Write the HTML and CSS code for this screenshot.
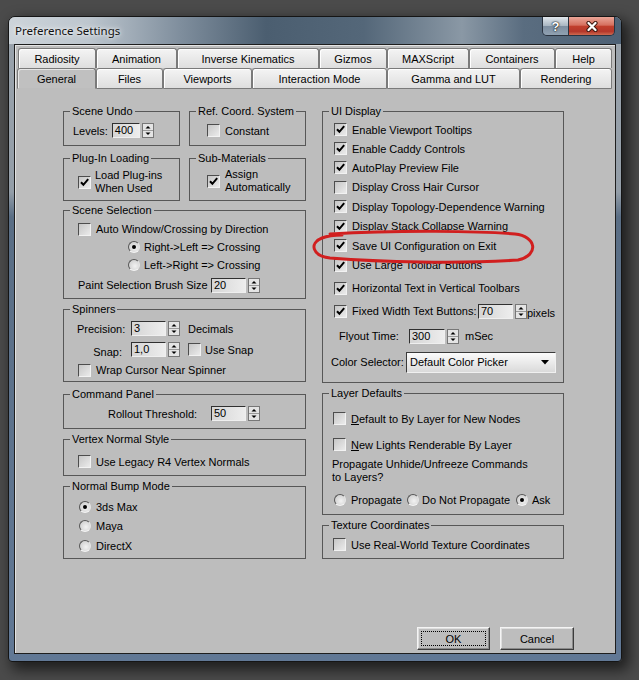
FILE: index.html
```html
<!DOCTYPE html>
<html>
<head>
<meta charset="utf-8">
<title>Preference Settings</title>
<link rel="stylesheet" href="styles.css">
</head>
<body>
<div class="window">
  <div class="titlebar">
    <span class="title">Preference Settings</span>
    <div class="caps">
      <div class="cap help">?</div>
      <div class="cap close"><svg width="14" height="11" viewBox="0 0 14 11"><path d="M3.5 2 L10.5 9 M10.5 2 L3.5 9" stroke="#3b1810" stroke-width="4.2" stroke-linecap="round"/><path d="M3.5 2 L10.5 9 M10.5 2 L3.5 9" stroke="#fff" stroke-width="2.3" stroke-linecap="round"/></svg></div>
    </div>
  </div>
  <div class="client">
    <div class="tabs">
      <div class="tabrow back">
        <div class="tab w78">Radiosity</div>
        <div class="tab w81">Animation</div>
        <div class="tab w142">Inverse Kinematics</div>
        <div class="tab w68">Gizmos</div>
        <div class="tab w82">MAXScript</div>
        <div class="tab w86">Containers</div>
        <div class="tab w57">Help</div>
      </div>
      <div class="tabrow front">
        <div class="tab sel w79">General</div>
        <div class="tab w67">Files</div>
        <div class="tab w89">Viewports</div>
        <div class="tab w135">Interaction Mode</div>
        <div class="tab w133">Gamma and LUT</div>
        <div class="tab w92">Rendering</div>
      </div>
    </div>
    <div class="panel">
      <div class="col left">
        <div class="pair">
          <div class="group g-undo"><span class="gt">Scene Undo</span>
            <div class="row h15"><span>Levels:</span><span class="field w28 ml4">400</span><svg class="arr" width="12" height="15" viewBox="0 0 12 15"><rect x=".5" y=".5" width="11" height="14" fill="#e4e4e4" stroke="#777"/><path d="M1 7.5h10" stroke="#999"/><path d="M3.5 5.5h5L6 3z"/><path d="M3.5 9.5h5L6 12z"/></svg></div>
          </div>
          <div class="group g-ref"><span class="gt">Ref. Coord. System</span>
            <div class="row h13"><span class="cb"></span><span class="ml5">Constant</span></div>
          </div>
        </div>
        <div class="pair mt12">
          <div class="group g-plug"><span class="gt">Plug-In Loading</span>
            <div class="row"><span class="cb"><svg width="11" height="11" viewBox="0 0 11 11"><path d="M2 5.2l2.4 2.6 4.8-5.6" fill="none" stroke="#000" stroke-width="2"/></svg></span><span class="two ml4">Load Plug-ins<br>When Used</span></div>
          </div>
          <div class="group g-sub"><span class="gt">Sub-Materials</span>
            <div class="row"><span class="cb"><svg width="11" height="11" viewBox="0 0 11 11"><path d="M2 5.2l2.4 2.6 4.8-5.6" fill="none" stroke="#000" stroke-width="2"/></svg></span><span class="two ml5">Assign<br>Automatically</span></div>
          </div>
        </div>
        <div class="group g-sel mt9"><span class="gt">Scene Selection</span>
          <div class="row h18"><span class="cb"></span><span class="ml5">Auto Window/Crossing by Direction</span></div>
          <div class="row h18 ml50"><span class="rb on"></span><span class="ml4">Right-&gt;Left =&gt; Crossing</span></div>
          <div class="row h18 ml50"><span class="rb"></span><span class="ml4">Left-&gt;Right =&gt; Crossing</span></div>
          <div class="row h18 mt2"><span class="lbl w133">Paint Selection Brush Size</span><span class="field w35">20</span><svg class="arr" width="12" height="15" viewBox="0 0 12 15"><rect x=".5" y=".5" width="11" height="14" fill="#e4e4e4" stroke="#777"/><path d="M1 7.5h10" stroke="#999"/><path d="M3.5 5.5h5L6 3z"/><path d="M3.5 9.5h5L6 12z"/></svg></div>
        </div>
        <div class="group g-spin mt10"><span class="gt">Spinners</span>
          <div class="row h21"><span class="lbl w45 rt">Precision:</span><span class="field w35 ml9">3</span><svg class="arr" width="12" height="15" viewBox="0 0 12 15"><rect x=".5" y=".5" width="11" height="14" fill="#e4e4e4" stroke="#777"/><path d="M1 7.5h10" stroke="#999"/><path d="M3.5 5.5h5L6 3z"/><path d="M3.5 9.5h5L6 12z"/></svg><span class="ml8">Decimals</span></div>
          <div class="row h21"><span class="lbl w45 rt low">Snap:</span><span class="field w35 ml9">1,0</span><svg class="arr" width="12" height="15" viewBox="0 0 12 15"><rect x=".5" y=".5" width="11" height="14" fill="#e4e4e4" stroke="#777"/><path d="M1 7.5h10" stroke="#999"/><path d="M3.5 5.5h5L6 3z"/><path d="M3.5 9.5h5L6 12z"/></svg><span class="cb ml8"></span><span class="ml4">Use Snap</span></div>
          <div class="row h20"><span class="cb ml1"></span><span class="ml5">Wrap Cursor Near Spinner</span></div>
        </div>
        <div class="group g-cmd mt12"><span class="gt">Command Panel</span>
          <div class="row h15"><span class="lbl w103">Rollout Threshold:</span><span class="field w35">50</span><svg class="arr" width="12" height="15" viewBox="0 0 12 15"><rect x=".5" y=".5" width="11" height="14" fill="#e4e4e4" stroke="#777"/><path d="M1 7.5h10" stroke="#999"/><path d="M3.5 5.5h5L6 3z"/><path d="M3.5 9.5h5L6 12z"/></svg></div>
        </div>
        <div class="group g-vtx mt10"><span class="gt">Vertex Normal Style</span>
          <div class="row h13"><span class="cb"></span><span class="ml5">Use Legacy R4 Vertex Normals</span></div>
        </div>
        <div class="group g-bump mt10"><span class="gt">Normal Bump Mode</span>
          <div class="row h19"><span class="rb on"></span><span class="ml5">3ds Max</span></div>
          <div class="row h20"><span class="rb"></span><span class="ml5">Maya</span></div>
          <div class="row h20"><span class="rb"></span><span class="ml5">DirectX</span></div>
        </div>
      </div>
      <div class="col right">
        <div class="group g-ui"><span class="gt">UI Display</span>
          <div class="row h19"><span class="cb"><svg width="11" height="11" viewBox="0 0 11 11"><path d="M2 5.2l2.4 2.6 4.8-5.6" fill="none" stroke="#000" stroke-width="2"/></svg></span><span class="ml5">Enable Viewport Tooltips</span></div>
          <div class="row h19"><span class="cb"><svg width="11" height="11" viewBox="0 0 11 11"><path d="M2 5.2l2.4 2.6 4.8-5.6" fill="none" stroke="#000" stroke-width="2"/></svg></span><span class="ml5">Enable Caddy Controls</span></div>
          <div class="row h19"><span class="cb"><svg width="11" height="11" viewBox="0 0 11 11"><path d="M2 5.2l2.4 2.6 4.8-5.6" fill="none" stroke="#000" stroke-width="2"/></svg></span><span class="ml5">AutoPlay Preview File</span></div>
          <div class="row h20"><span class="cb"></span><span class="ml5">Display Cross Hair Cursor</span></div>
          <div class="row h19"><span class="cb"><svg width="11" height="11" viewBox="0 0 11 11"><path d="M2 5.2l2.4 2.6 4.8-5.6" fill="none" stroke="#000" stroke-width="2"/></svg></span><span class="ml5">Display Topology-Dependence Warning</span></div>
          <div class="row h20"><span class="cb"><svg width="11" height="11" viewBox="0 0 11 11"><path d="M2 5.2l2.4 2.6 4.8-5.6" fill="none" stroke="#000" stroke-width="2"/></svg></span><span class="ml5">Display Stack Collapse Warning</span></div>
          <div class="row h19"><span class="cb"><svg width="11" height="11" viewBox="0 0 11 11"><path d="M2 5.2l2.4 2.6 4.8-5.6" fill="none" stroke="#000" stroke-width="2"/></svg></span><span class="ml5">Save UI Configuration on Exit</span></div>
          <div class="row h20"><span class="cb"><svg width="11" height="11" viewBox="0 0 11 11"><path d="M2 5.2l2.4 2.6 4.8-5.6" fill="none" stroke="#000" stroke-width="2"/></svg></span><span class="ml5">Use Large Toolbar Buttons</span></div>
          <div class="row h20 mt3"><span class="cb"><svg width="11" height="11" viewBox="0 0 11 11"><path d="M2 5.2l2.4 2.6 4.8-5.6" fill="none" stroke="#000" stroke-width="2"/></svg></span><span class="ml5">Horizontal Text in Vertical Toolbars</span></div>
          <div class="row h22 mt2"><span class="cb"><svg width="11" height="11" viewBox="0 0 11 11"><path d="M2 5.2l2.4 2.6 4.8-5.6" fill="none" stroke="#000" stroke-width="2"/></svg></span><span class="lbl w125 ml5">Fixed Width Text Buttons:</span><span class="field w35 ml1">70</span><svg class="arr" width="12" height="15" viewBox="0 0 12 15"><rect x=".5" y=".5" width="11" height="14" fill="#e4e4e4" stroke="#777"/><path d="M1 7.5h10" stroke="#999"/><path d="M3.5 5.5h5L6 3z"/><path d="M3.5 9.5h5L6 12z"/></svg><span class="low">pixels</span></div>
          <div class="row h20 mt4"><span class="lbl w70 ml5">Flyout Time:</span><span class="field w36">300</span><svg class="arr" width="12" height="15" viewBox="0 0 12 15"><rect x=".5" y=".5" width="11" height="14" fill="#e4e4e4" stroke="#777"/><path d="M1 7.5h10" stroke="#999"/><path d="M3.5 5.5h5L6 3z"/><path d="M3.5 9.5h5L6 12z"/></svg><span class="ml6">mSec</span></div>
          <div class="row h22 mt5"><span class="lbl w75 mln3">Color Selector:</span><div class="combo"><span>Default Color Picker</span><svg class="drop" width="8" height="5" viewBox="0 0 8 5"><path d="M0 0h8L4 4.5z"/></svg></div></div>
        </div>
        <div class="group g-layer mt10"><span class="gt">Layer Defaults</span>
          <div class="row h19"><span class="cb"></span><span class="ml5"><u>D</u>efault to By Layer for New Nodes</span></div>
          <div class="row h19 mt7"><span class="cb"></span><span class="ml5"><u>N</u>ew Lights Renderable By Layer</span></div>
          <div class="two mt4 mln1">Propagate Unhide/Unfreeze Commands<br>to Layers?</div>
          <div class="row h16 mt8 ml1">
            <span class="ritem w73"><span class="rb"></span><span class="ml5">Propagate</span></span>
            <span class="ritem w109"><span class="rb"></span><span class="ml3">Do Not Propagate</span></span>
            <span class="ritem"><span class="rb on"></span><span class="ml4">Ask</span></span>
          </div>
        </div>
        <div class="group g-tex mt10"><span class="gt">Texture Coordinates</span>
          <div class="row h13"><span class="cb"></span><span class="ml5">Use Real-World Texture Coordinates</span></div>
        </div>
      </div>
    </div>
    <div class="btnrow">
      <button class="btn ok">OK</button>
      <button class="btn cancel">Cancel</button>
    </div>
  </div>
</div>
<svg class="annot" width="639" height="680" viewBox="0 0 639 680"><path d="M330 234 C400 230 480 231 515 234 C536 236 540 255 518 260 C460 264 380 262 330 258 C312 256 309 243 322 238 C327 236 334 235 342 235" fill="none" stroke="#d11f1f" stroke-width="3" stroke-linecap="round"/></svg>
</body>
</html>
```

FILE: styles.css
```css
* { box-sizing: border-box; }
html, body { margin: 0; padding: 0; }
body {
  width: 639px;
  height: 680px;
  position: relative;
  overflow: hidden;
  background: #4b4b4b;
  font-family: "Liberation Sans", Arial, sans-serif;
  font-size: 11px;
  color: #000;
}

.window {
  margin: 16px 0 0 8px;
  width: 614px;
  height: 646px;
  border: 1px solid #151515;
  border-radius: 7px 7px 4px 4px;
  background: linear-gradient(to bottom, #9aa3ac 0, #949ea8 175px, #5a6e85 200px, #617895 100%);
  box-shadow: 5px 6px 14px 2px rgba(0, 0, 0, 0.6);
  overflow: hidden;
  display: flex;
  flex-direction: column;
}

.titlebar {
  height: 27px;
  flex: none;
  display: flex;
  align-items: flex-start;
  background: linear-gradient(to right, #cdd4da 0%, #bdc6ce 13%, #7f8e9d 28%, #4b5e70 42%, #546779 58%, #8a98a5 74%, #5a6d80 84%, #4e6175 100%);
}
.title {
  font-family: "Noto Sans", "Liberation Sans", sans-serif;
  font-size: 11.5px;
  line-height: 27px;
  padding-left: 6px;
  color: #111;
  text-shadow: 0 0 6px #fff, 0 0 3px rgba(255, 255, 255, 0.8);
}
.caps {
  margin-left: auto;
  margin-right: 6px;
  display: flex;
  height: 19px;
  border: 1px solid #2a3340;
  border-top: none;
  border-radius: 0 0 5px 5px;
  overflow: hidden;
}
.cap { height: 18px; display: flex; align-items: center; justify-content: center; }
.help {
  width: 26px;
  border-right: 1px solid #2a3340;
  background: linear-gradient(#e1e7ec, #aab7c3 48%, #7d8ea0 52%, #90a1b2);
  color: #fff;
  font-weight: bold;
  font-size: 13px;
  text-shadow: 0 0 2px #000, 0 0 1px #000;
}
.close {
  width: 45px;
  background: linear-gradient(#eaa698, #d6705f 45%, #c13f2c 52%, #b5372a 80%, #cf6a50);
}

.client {
  margin: 0 5px;
  height: 610px;
  flex: none;
  background: #bdbdbd;
  border: 1px solid #1e1e1e;
  box-shadow: inset 1px 1px 0 #e4e4e4;
  display: flex;
  flex-direction: column;
}

.tabs { padding-top: 3px; flex: none; }
.tabrow { display: flex; }
.back { margin-left: 3px; height: 20px; }
.front { margin-left: 2px; height: 21px; }
.tab {
  flex: none;
  height: 100%;
  border: 1px solid #7a7a7a;
  border-radius: 3px 3px 0 0;
  background: linear-gradient(#f4f4f4, #dedede);
  box-shadow: inset 1px 1px 0 #fff;
  display: flex;
  align-items: center;
  justify-content: center;
  white-space: nowrap;
}
.back .tab { border-bottom: none; }
.front .tab.sel {
  background: #c0c0c0;
  border-bottom-color: #bdbdbd;
  box-shadow: inset 1px 1px 0 #e6e6e6;
}

.w28 { width: 28px; } .w35 { width: 35px; } .w36 { width: 36px; } .w45 { width: 45px; }
.w57 { width: 57px; } .w67 { width: 67px; } .w68 { width: 68px; } .w70 { width: 70px; }
.w73 { width: 73px; } .w75 { width: 75px; } .w78 { width: 78px; } .w79 { width: 79px; }
.w81 { width: 81px; } .w82 { width: 82px; } .w86 { width: 86px; } .w89 { width: 89px; }
.w92 { width: 92px; } .w103 { width: 103px; } .w109 { width: 109px; } .w125 { width: 125px; }
.w133 { width: 133px; } .w135 { width: 135px; } .w142 { width: 142px; }

.panel {
  height: 531px;
  flex: none;
  border-left: 1px solid #e2e2e2;
  display: flex;
  gap: 16px;
  padding: 22px 0 0 47px;
}
.col { display: flex; flex-direction: column; }
.left { width: 243px; }
.right { width: 242px; }
.pair { display: flex; gap: 9px; }
.pair .group { width: 117px; }

.group {
  position: relative;
  border: 1px solid #575757;
  flex: none;
}
.gt {
  position: absolute;
  top: -8px;
  left: 6px;
  padding: 0 2px;
  background: #bdbdbd;
  line-height: 14px;
  white-space: nowrap;
}

.g-undo { height: 35px; padding: 11px 0 0 9px; }
.g-ref { height: 35px; padding: 12px 0 0 17px; }
.g-plug { height: 43px; padding: 10px 0 0 14px; }
.g-sub { height: 43px; padding: 9px 0 0 17px; }
.g-sel { height: 89px; padding: 9px 0 0 14px; }
.g-spin { height: 73px; padding: 8px 0 0 13px; }
.g-cmd { height: 35px; padding: 11px 0 0 44px; }
.g-vtx { height: 37px; padding: 15px 0 0 14px; }
.g-bump { height: 73px; padding: 10px 0 0 15px; }
.g-ui { height: 272px; padding: 8px 0 0 11px; }
.g-layer { height: 122px; padding: 15px 0 0 10px; }
.g-tex { height: 34px; padding: 12px 0 0 10px; }

.row { display: flex; align-items: center; white-space: nowrap; }
.h13 { height: 13px; } .h15 { height: 15px; } .h16 { height: 16px; } .h18 { height: 18px; }
.h19 { height: 19px; } .h20 { height: 20px; } .h21 { height: 21px; } .h22 { height: 22px; }

.mt2 { margin-top: 2px; } .mt3 { margin-top: 3px; } .mt4 { margin-top: 4px; } .mt5 { margin-top: 5px; }
.mt7 { margin-top: 7px; } .mt8 { margin-top: 8px; } .mt9 { margin-top: 9px; } .mt10 { margin-top: 10px; }
.mt12 { margin-top: 12px; }
.ml1 { margin-left: 1px; } .ml3 { margin-left: 3px; } .ml4 { margin-left: 4px; } .ml5 { margin-left: 5px; }
.ml6 { margin-left: 6px; } .ml8 { margin-left: 8px; } .ml9 { margin-left: 9px; } .ml50 { margin-left: 50px; }
.mln1 { margin-left: -1px; } .mln3 { margin-left: -3px; }

.two { line-height: 13px; white-space: nowrap; }
.lbl { flex: none; white-space: nowrap; }
.rt { text-align: right; }
.low { padding-top: 4px; }

.cb {
  width: 13px;
  height: 13px;
  flex: none;
  border: 1px solid;
  border-color: #4d4d4d #f2f2f2 #f2f2f2 #4d4d4d;
  background: linear-gradient(135deg, #c6c6c6, #ebebeb);
  display: flex;
}
.cb svg { display: block; }

.rb {
  width: 12px;
  height: 12px;
  flex: none;
  border-radius: 50%;
  border: 1px solid;
  border-color: #575757 #e6e6e6 #f4f4f4 #575757;
  background: radial-gradient(circle at 60% 60%, #f2f2f2, #c6c6c6);
  position: relative;
}
.rb.on::after {
  content: "";
  position: absolute;
  left: 3px;
  top: 3px;
  width: 4px;
  height: 4px;
  border-radius: 50%;
  background: #000;
}
.ritem { display: flex; align-items: center; flex: none; }

.field {
  height: 15px;
  flex: none;
  border: 1px solid;
  border-color: #303030 #efefef #efefef #303030;
  background: linear-gradient(to right, #d5d5d5, #ededed);
  line-height: 13px;
  padding-left: 2px;
}
.arr { display: block; flex: none; margin-left: 2px; }

.combo {
  width: 150px;
  height: 21px;
  flex: none;
  display: flex;
  align-items: center;
  padding-left: 3px;
  border: 1px solid;
  border-color: #3a3a3a #f0f0f0 #f0f0f0 #3a3a3a;
  background: linear-gradient(#fbfbfb, #dadada);
}
.drop { margin-left: auto; margin-right: 6px; display: block; }

.btnrow {
  display: flex;
  justify-content: flex-end;
  gap: 10px;
  margin-top: 7px;
  padding-right: 41px;
}
.btn {
  position: relative;
  height: 23px;
  width: 73px;
  padding: 0;
  font: inherit;
  color: #000;
  background: #bdbdbd;
  border: 1px solid;
  border-color: #f4f4f4 #3c3c3c #3c3c3c #f4f4f4;
  box-shadow: inset -1px -1px 0 #8a8a8a, inset 1px 1px 0 #dedede;
}
.cancel { width: 74px; }
.ok::after {
  content: "";
  position: absolute;
  left: 3px;
  top: 3px;
  right: 3px;
  bottom: 3px;
  border: 1px dotted #000;
}

.annot { position: absolute; left: 0; top: 0; pointer-events: none; }
```
